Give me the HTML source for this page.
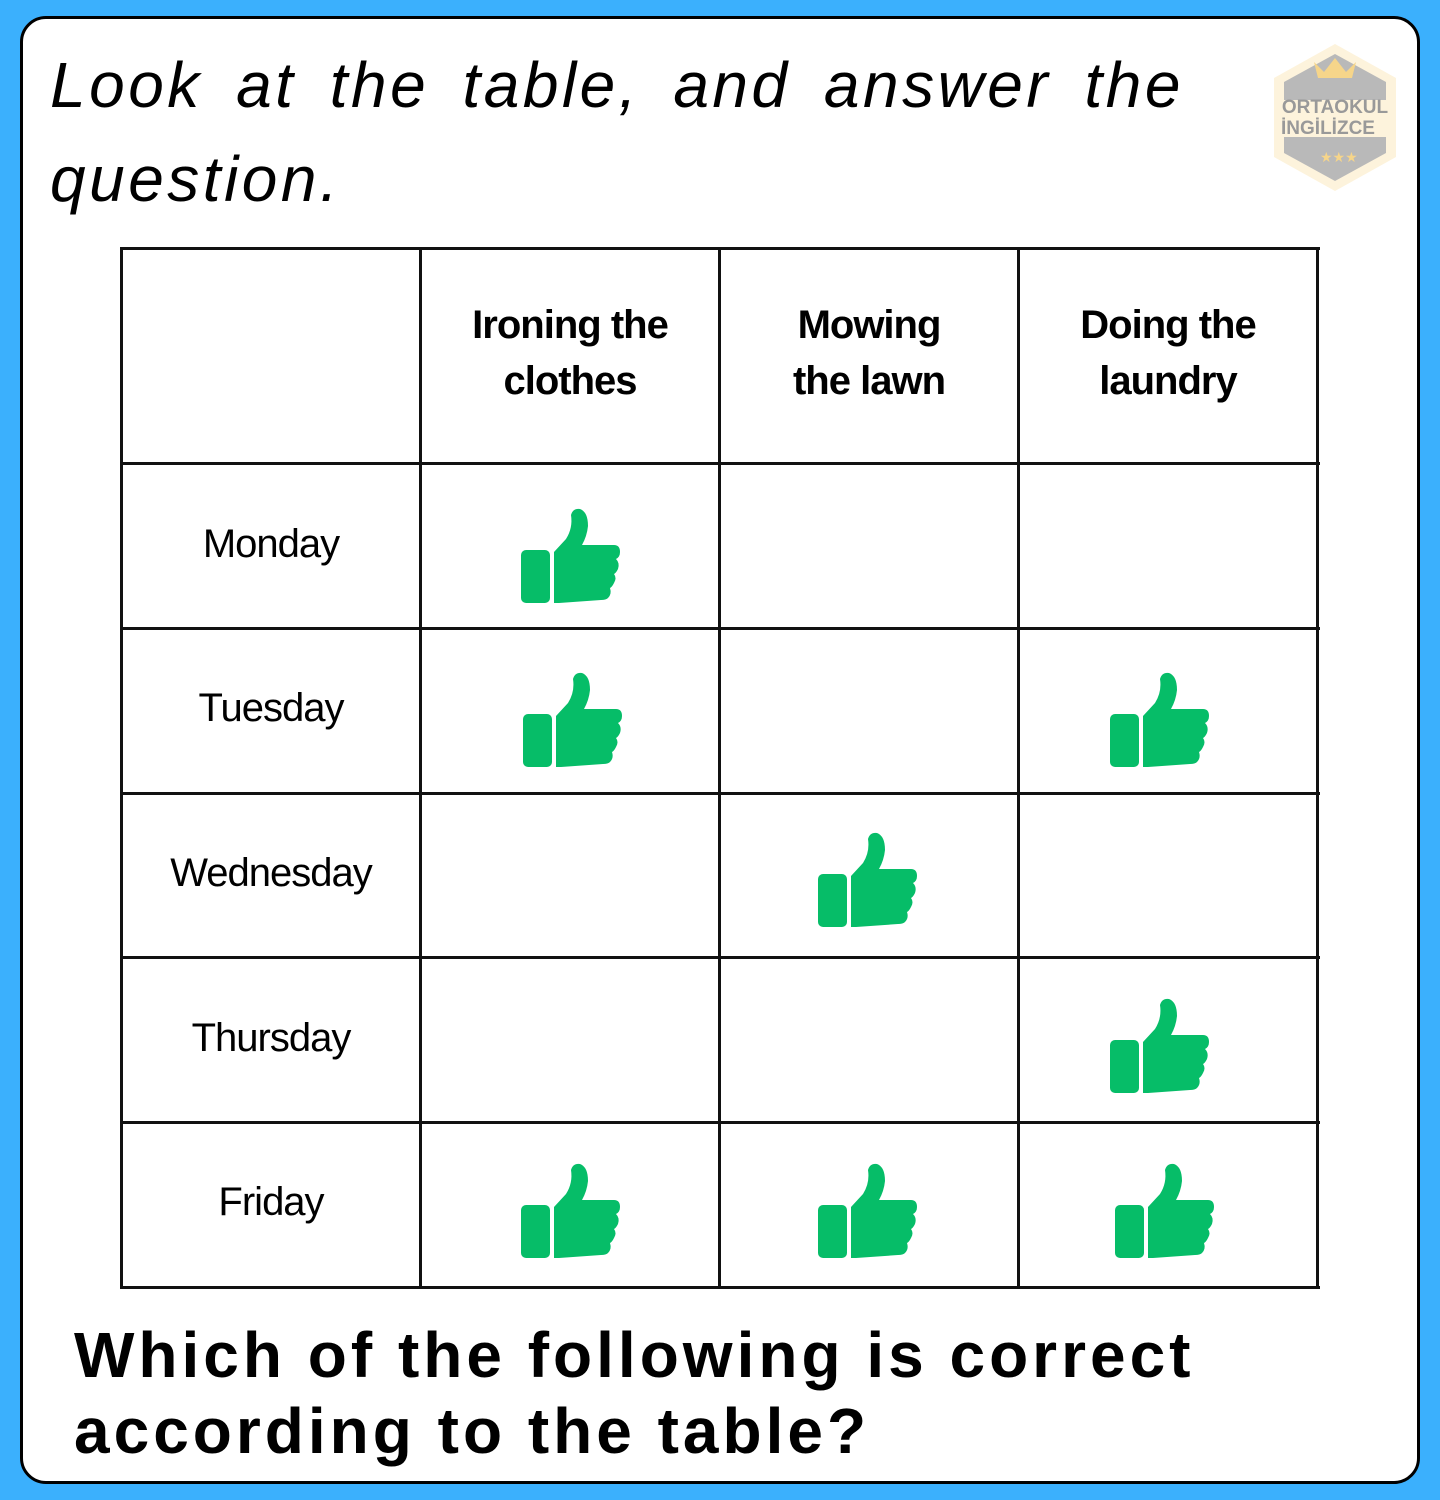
<!DOCTYPE html>
<html><head><style>
html,body{margin:0;padding:0}
body{width:1440px;height:1500px;background:#3bb0fd;position:relative;overflow:hidden;font-family:"Liberation Sans",sans-serif}
.card{position:absolute;left:20px;top:16px;width:1394px;height:1462px;background:#fff;border:3px solid #000;border-radius:26px}
.t{position:absolute;white-space:nowrap;color:#000}
.title{left:50px;font-style:italic;font-size:64px;word-spacing:12px;letter-spacing:3.5px}
.v{position:absolute;top:247px;width:3px;height:1042px;background:#111}
.h{position:absolute;left:120px;height:3px;width:1200px;background:#111}
.c{position:absolute;width:296px;text-align:center;font-size:40px;letter-spacing:-1px;line-height:56px}
.hd{font-weight:bold}
svg.th{position:absolute;width:99px;height:96px}
.q{left:74px;font-weight:bold;font-size:64px;letter-spacing:4px}
</style></head><body>
<div class="card"></div>
<div class="t title" style="top:48px">Look at the table, and answer the</div>
<div class="t title" style="top:142px">question.</div>
<svg style="position:absolute;left:1268px;top:40px" width="134" height="155" viewBox="0 0 134 155">
<polygon points="67,4 128,38 128,117 67,151 6,117 6,38" fill="#fdf3dc"/>
<polygon points="67,14 118,42 118,60 16,60 16,42" fill="#b9b9b9"/>
<polygon points="16,97 118,97 118,113 67,141 16,113" fill="#b9b9b9"/>
<path d="M50 38 L46 22 L56 32 L67 18 L78 32 L88 22 L84 38 Z" fill="#f6d58a"/>
<text x="67" y="73" text-anchor="middle" font-size="19" font-weight="bold" fill="#999" font-family="Liberation Sans">ORTAOKUL</text>
<text x="60" y="94" text-anchor="middle" font-size="19" font-weight="bold" fill="#999" font-family="Liberation Sans">İNGİLİZCE</text>
<text x="52" y="122" font-size="14" fill="#f6d58a">★★★</text>
</svg>
<div class="v" style="left:120px"></div><div class="v" style="left:419px"></div><div class="v" style="left:718px"></div><div class="v" style="left:1017px"></div><div class="v" style="left:1316px"></div>
<div class="h" style="top:247px"></div><div class="h" style="top:462px"></div><div class="h" style="top:627px"></div><div class="h" style="top:792px"></div><div class="h" style="top:956px"></div><div class="h" style="top:1121px"></div><div class="h" style="top:1286px"></div>
<div class="c hd" style="left:422px;top:297px">Ironing the<br>clothes</div>
<div class="c hd" style="left:721px;top:297px">Mowing<br>the lawn</div>
<div class="c hd" style="left:1020px;top:297px">Doing the<br>laundry</div>
<div class="c" style="left:123px;top:516px">Monday</div>
<div class="c" style="left:123px;top:680px">Tuesday</div>
<div class="c" style="left:123px;top:845px">Wednesday</div>
<div class="c" style="left:123px;top:1010px">Thursday</div>
<div class="c" style="left:123px;top:1174px">Friday</div>
<svg width="0" height="0" style="position:absolute"><defs><g id="tu" fill="#06bd68"><rect x="0" y="42" width="29" height="53" rx="5"/><path d="M33 95 V44 L45 31 Q52 20 50 7 Q52 0 59 1 Q67 4 67 18 Q66 28 61 37 H93 Q99 37 99 44 Q99 49 95 51 Q99 55 97 61 Q95 65 93 66 Q96 70 93 75 Q91 79 89 80 Q91 86 87 90 Q85 92 80 92 L38 95 Z"/></g></defs></svg>
<svg class="th" style="left:521px;top:508px" viewBox="0 0 99 96"><use href="#tu"/></svg>
<svg class="th" style="left:523px;top:672px" viewBox="0 0 99 96"><use href="#tu"/></svg>
<svg class="th" style="left:1110px;top:672px" viewBox="0 0 99 96"><use href="#tu"/></svg>
<svg class="th" style="left:818px;top:832px" viewBox="0 0 99 96"><use href="#tu"/></svg>
<svg class="th" style="left:1110px;top:998px" viewBox="0 0 99 96"><use href="#tu"/></svg>
<svg class="th" style="left:521px;top:1163px" viewBox="0 0 99 96"><use href="#tu"/></svg>
<svg class="th" style="left:818px;top:1163px" viewBox="0 0 99 96"><use href="#tu"/></svg>
<svg class="th" style="left:1115px;top:1163px" viewBox="0 0 99 96"><use href="#tu"/></svg>
<div class="t q" style="top:1318px">Which of the following is correct</div>
<div class="t q" style="top:1394px">according to the table?</div>
</body></html>
